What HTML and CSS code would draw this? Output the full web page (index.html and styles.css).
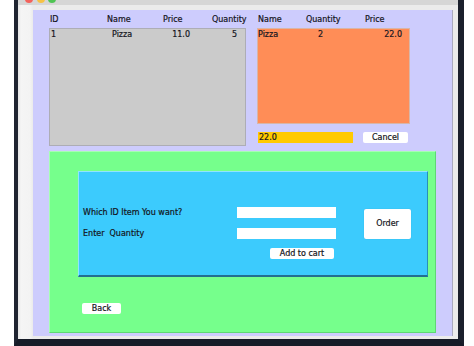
FILE: index.html
```html
<!DOCTYPE html>
<html>
<head>
<meta charset="utf-8">
<link rel="stylesheet" href="styles.css">
</head>
<body>
<div class="window">
  <div class="titlebar">
    <span class="dot dot-red"></span><span class="dot dot-yellow"></span><span class="dot dot-green"></span>
  </div>
  <div class="content">
    <div class="panel">
      <div class="top">
        <div class="col-left">
          <div class="thead thead-left"><span>ID</span><span>Name</span><span>Price</span><span>Quantity</span></div>
          <div class="table table-gray">
            <div class="trow trow-left"><span>1</span><span>Pizza</span><span class="num">11.0</span><span class="num">5</span></div>
          </div>
        </div>
        <div class="col-right">
          <div class="thead thead-right"><span>Name</span><span>Quantity</span><span>Price</span></div>
          <div class="table table-orange">
            <div class="trow trow-right"><span>Pizza</span><span>2</span><span class="num">22.0</span></div>
          </div>
          <div class="total-row">
            <div class="total">22.0</div>
            <button class="btn btn-cancel">Cancel</button>
          </div>
        </div>
      </div>
      <div class="green">
        <div class="blue">
          <div class="form">
            <div class="label label-id">Which ID Item You want?</div>
            <div class="field field-id"></div>
            <div class="label label-qty">Enter&nbsp; Quantity</div>
            <div class="field field-qty"></div>
            <button class="btn btn-order">Order</button>
            <button class="btn btn-add">Add to cart</button>
          </div>
        </div>
        <button class="btn btn-back">Back</button>
      </div>
    </div>
  </div>
</div>
</body>
</html>
```

FILE: styles.css
```css
* { box-sizing: border-box; }
html, body { margin: 0; padding: 0; background: #ffffff; }
body {
  font-family: "DejaVu Sans", sans-serif;
  font-size: 8px;
  color: #141420;
  -webkit-text-stroke: 0.2px #141420;
  width: 474px;
  height: 346px;
  overflow: hidden;
}
.window {
  margin-left: 14px;
  width: 450px;
  height: 346px;
  border-left: 4px solid #1f2431;
  border-right: 6px solid #1a1f2c;
  border-bottom: 7px solid #161b27;
  background: #ececec;
  display: flex;
  flex-direction: column;
}
.titlebar {
  height: 5px;
  background: #d6d6d6;
  display: flex;
  align-items: flex-end;
  gap: 3.5px;
  padding-left: 7px;
  overflow: hidden;
  flex: none;
}
.dot {
  width: 8px;
  height: 8px;
  border-radius: 50%;
  margin-bottom: 2px;
  flex: none;
}
.dot-red { background: #f3625c; }
.dot-yellow { background: #f6c245; }
.dot-green { background: #4fc454; }
.content {
  flex: 1;
  padding: 5px 5px 3px 15px;
  background: linear-gradient(to right, #e4e4e4 0, #f5f5f5 3px, #f3f3f3 12px, #ebebeb 15px);
}
.panel {
  height: 326px;
  background: #cdccfd;
  border-right: 1px solid #aaaabf;
  padding: 4px 16px 3px 16px;
}
.top {
  display: flex;
  gap: 11px;
  height: 132px;
}
.col-left { width: 197px; }
.col-right { width: 153px; }
.thead {
  display: grid;
  height: 11px;
  line-height: 11px;
  margin-bottom: 3px;
  white-space: nowrap;
}
.thead-left { grid-template-columns: 57px 56px 49px 1fr; padding-left: 1px; }
.thead-right { grid-template-columns: 48px 59px 1fr; padding-left: 1px; }
.table { border: 1px solid #adadb5; }
.table-gray { background: #cbcbcb; height: 118px; }
.table-orange { background: #ff8d57; height: 96px; border-color: #d8b6a8; }
.trow {
  display: grid;
  height: 11px;
  line-height: 11px;
  white-space: nowrap;
}
.trow-left { grid-template-columns: 61px 51px 27px 47px; padding-left: 1px; }
.trow-right { grid-template-columns: 60px 40px 44px; }
.num { text-align: right; }
.total-row {
  display: flex;
  gap: 10px;
  margin-top: 8px;
}
.total {
  width: 95px;
  height: 11px;
  line-height: 11px;
  margin-left: 1px;
  padding-left: 1px;
  background: #ffca00;
}
.btn {
  font-family: "DejaVu Sans", sans-serif;
  font-size: 8px;
  color: #141420;
  -webkit-text-stroke: 0.2px #141420;
  background: #ffffff;
  border: none;
  border-radius: 2px;
  padding: 0;
  margin: 0;
  height: 11px;
  line-height: 11px;
  text-align: center;
}
.btn-cancel { width: 45px; }
.green {
  margin-top: 5px;
  background: #76ff8c;
  border: 1px solid #5ed873;
  border-top-color: #a6ffb4;
  border-left-color: #a6ffb4;
  padding: 19px 7px 18px 28px;
  height: 182px;
}
.blue {
  background: #3ccbfd;
  border: 1px solid #2a8fb8;
  border-top-color: #8fe4ff;
  border-left-color: #8fe4ff;
  border-bottom: 2px solid #236f90;
  height: 106px;
  padding: 35px 0 16px 4px;
}
.form {
  display: grid;
  grid-template-columns: 154px 99px 28px 47px;
  grid-template-rows: 21px 20px 11px;
}
.label {
  line-height: 11px;
  height: 11px;
  white-space: nowrap;
  align-self: start;
  grid-column: 1;
}
.label-id { grid-row: 1; }
.label-qty { grid-row: 2; }
.field {
  background: #ffffff;
  height: 11px;
  align-self: start;
  grid-column: 2;
}
.field-id { grid-row: 1; }
.field-qty { grid-row: 2; }
.btn-order {
  grid-column: 4;
  grid-row: 1 / span 2;
  height: 30px;
  line-height: 30px;
  align-self: start;
  margin-top: 2px;
  box-shadow: 0 0 1px rgba(0,0,0,0.2);
}
.btn-add {
  grid-column: 2;
  grid-row: 3;
  width: 64px;
  justify-self: end;
  margin-right: 2px;
}
.btn-back {
  display: block;
  margin-top: 26px;
  margin-left: 4px;
  width: 39px;
}
```
